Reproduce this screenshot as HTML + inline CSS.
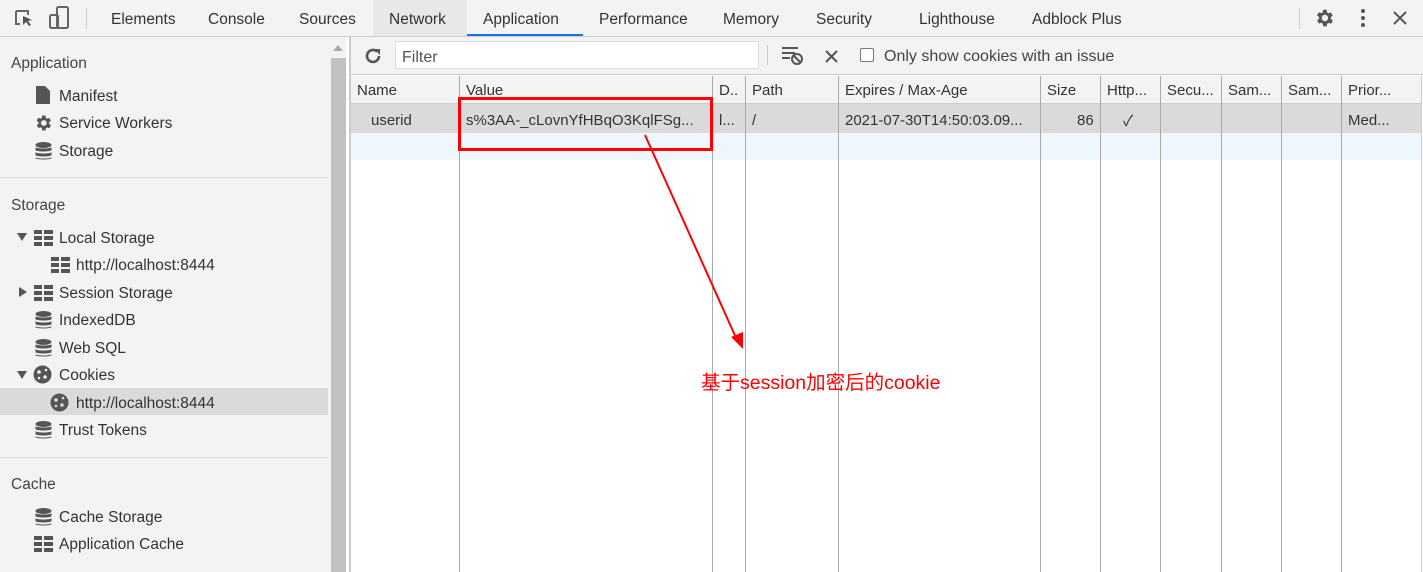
<!DOCTYPE html>
<html><head><meta charset="utf-8"><style>
*{margin:0;padding:0;box-sizing:border-box}
body{width:1423px;height:572px;overflow:hidden;position:relative;background:#fff;font-family:"Liberation Sans","Noto Sans CJK SC",sans-serif;font-size:15px;color:#333}
.a{position:absolute;white-space:nowrap}
.tab{position:absolute;top:11px;color:#333;font-size:15.5px}
.sb{position:absolute;left:0;top:37px;width:330px;height:535px;background:#f3f3f3}
.h{position:absolute;left:11px;color:#444;font-size:15.5px;margin-top:2px}
.it{position:absolute;color:#333;font-size:15.5px;margin-top:2px}
.ic{position:absolute;fill:#555}
.vl{position:absolute;top:76px;bottom:0;width:1px;background:#aaa}
</style></head><body>
<div class="a" style="left:0;top:0;width:1423px;height:37px;background:#f3f3f3;border-bottom:1px solid #ccc"></div>
<svg class="a" style="left:13px;top:8px" width="22" height="22" viewBox="0 0 22 22"><path d="M3 3h12v4M3 3v13h4" fill="none" stroke="#666" stroke-width="2"/><path d="M10 8l9 4-4 1 3 4-2 1-3-4-3 3z" fill="#555"/></svg>
<svg class="a" style="left:48px;top:6px" width="22" height="24" viewBox="0 0 22 24"><rect x="9" y="1" width="11" height="21" rx="1.5" fill="none" stroke="#666" stroke-width="2"/><rect x="2" y="9" width="8" height="13" rx="1.5" fill="none" stroke="#666" stroke-width="2"/></svg>
<div class="a" style="left:86px;top:8px;width:1px;height:21px;background:#ccc"></div>
<div class="tab" style="left:111px">Elements</div>
<div class="tab" style="left:208px">Console</div>
<div class="tab" style="left:299px">Sources</div>
<div class="a" style="left:373px;top:0;width:94px;height:36px;background:#e8e8e8"></div>
<div class="tab" style="left:389px">Network</div>
<div class="tab" style="left:483px">Application</div>
<div class="a" style="left:467px;top:34px;width:116px;height:2px;background:#1a73e8"></div>
<div class="tab" style="left:599px">Performance</div>
<div class="tab" style="left:723px">Memory</div>
<div class="tab" style="left:816px">Security</div>
<div class="tab" style="left:919px">Lighthouse</div>
<div class="tab" style="left:1032px">Adblock Plus</div>
<div class="a" style="left:1299px;top:8px;width:1px;height:21px;background:#ccc"></div>
<svg class="a" style="left:1313px;top:7px" width="22" height="22" viewBox="0 0 24 24"><path fill="#555" d="M19.4 13a7.5 7.5 0 000-2l2.1-1.6-2-3.5-2.5 1a7 7 0 00-1.7-1L15 3h-4l-.4 2.7a7 7 0 00-1.7 1l-2.5-1-2 3.5L6.6 11a7.5 7.5 0 000 2l-2.1 1.6 2 3.5 2.5-1a7 7 0 001.7 1L11 21h4l.4-2.7a7 7 0 001.7-1l2.5 1 2-3.5zM13 15.5a3.5 3.5 0 110-7 3.5 3.5 0 010 7z"/></svg>
<svg class="a" style="left:1358px;top:8px" width="10" height="20"><circle cx="5" cy="3" r="2" fill="#555"/><circle cx="5" cy="10" r="2" fill="#555"/><circle cx="5" cy="17" r="2" fill="#555"/></svg>
<svg class="a" style="left:1393px;top:11px" width="14" height="14"><path d="M1 1l12 12M13 1L1 13" stroke="#555" stroke-width="2"/></svg>

<div class="sb"></div>
<div class="a" style="left:330px;top:37px;width:16px;height:535px;background:#f3f3f3"></div>
<div class="a" style="left:331px;top:58px;width:15px;height:514px;background:#c1c1c1"></div>
<svg class="a" style="left:333px;top:45px" width="10" height="6"><path d="M0 6L5 0 10 6z" fill="#aaa"/></svg>
<div class="a" style="left:349px;top:37px;width:2px;height:535px;background:#ccc"></div>

<div class="h" style="top:53px">Application</div>
<svg class="ic" style="left:36px;top:86px" width="14" height="18"><path d="M0 0h9l5 5v13H0z"/></svg>
<div class="it" style="left:59px;top:86px">Manifest</div>
<svg class="ic" style="left:33px;top:113px" width="20" height="20" viewBox="0 0 24 24"><path d="M19.4 13a7.5 7.5 0 000-2l2.1-1.6-2-3.5-2.5 1a7 7 0 00-1.7-1L15 3h-4l-.4 2.7a7 7 0 00-1.7 1l-2.5-1-2 3.5L6.6 11a7.5 7.5 0 000 2l-2.1 1.6 2 3.5 2.5-1a7 7 0 001.7 1L11 21h4l.4-2.7a7 7 0 001.7-1l2.5 1 2-3.5zM13 15.5a3.5 3.5 0 110-7 3.5 3.5 0 010 7z"/></svg>
<div class="it" style="left:59px;top:113px">Service Workers</div>
<svg class="ic" style="left:35px;top:142px" width="17" height="18"><ellipse cx="8.5" cy="3" rx="8" ry="3"/><path d="M.5 5c0 2 16 2 16 0v3c0 2-16 2-16 0zM.5 10c0 2 16 2 16 0v3c0 2-16 2-16 0zM.5 15c0 2 16 2 16 0v1c0 2-16 2-16 0z"/></svg>
<div class="it" style="left:59px;top:141px">Storage</div>
<div class="a" style="left:0;top:177px;width:328px;height:1px;background:#ddd"></div>

<div class="h" style="top:195px">Storage</div>
<svg class="a" style="left:17px;top:233px" width="10" height="8"><path d="M0 0h10L5 8z" fill="#555"/></svg>
<svg class="ic" style="left:34px;top:230px" width="19" height="16"><rect x="0" y="0" width="8" height="4"/><rect x="10" y="0" width="9" height="4"/><rect x="0" y="6" width="8" height="4"/><rect x="10" y="6" width="9" height="4"/><rect x="0" y="12" width="8" height="4"/><rect x="10" y="12" width="9" height="4"/></svg>
<div class="it" style="left:59px;top:228px">Local Storage</div>
<svg class="ic" style="left:51px;top:257px" width="19" height="16"><rect x="0" y="0" width="8" height="4"/><rect x="10" y="0" width="9" height="4"/><rect x="0" y="6" width="8" height="4"/><rect x="10" y="6" width="9" height="4"/><rect x="0" y="12" width="8" height="4"/><rect x="10" y="12" width="9" height="4"/></svg>
<div class="it" style="left:76px;top:255px">http://localhost:8444</div>
<svg class="a" style="left:19px;top:287px" width="8" height="10"><path d="M0 0v10l8-5z" fill="#555"/></svg>
<svg class="ic" style="left:34px;top:285px" width="19" height="16"><rect x="0" y="0" width="8" height="4"/><rect x="10" y="0" width="9" height="4"/><rect x="0" y="6" width="8" height="4"/><rect x="10" y="6" width="9" height="4"/><rect x="0" y="12" width="8" height="4"/><rect x="10" y="12" width="9" height="4"/></svg>
<div class="it" style="left:59px;top:283px">Session Storage</div>
<svg class="ic" style="left:35px;top:311px" width="17" height="18"><ellipse cx="8.5" cy="3" rx="8" ry="3"/><path d="M.5 5c0 2 16 2 16 0v3c0 2-16 2-16 0zM.5 10c0 2 16 2 16 0v3c0 2-16 2-16 0zM.5 15c0 2 16 2 16 0v1c0 2-16 2-16 0z"/></svg>
<div class="it" style="left:59px;top:310px">IndexedDB</div>
<svg class="ic" style="left:35px;top:339px" width="17" height="18"><ellipse cx="8.5" cy="3" rx="8" ry="3"/><path d="M.5 5c0 2 16 2 16 0v3c0 2-16 2-16 0zM.5 10c0 2 16 2 16 0v3c0 2-16 2-16 0zM.5 15c0 2 16 2 16 0v1c0 2-16 2-16 0z"/></svg>
<div class="it" style="left:59px;top:338px">Web SQL</div>
<svg class="a" style="left:17px;top:371px" width="10" height="8"><path d="M0 0h10L5 8z" fill="#555"/></svg>
<svg class="a" style="left:33px;top:365px" width="19" height="19"><circle cx="9.5" cy="9.5" r="9" fill="#555"/><circle cx="6" cy="7" r="1.8" fill="#f3f3f3"/><circle cx="12" cy="12" r="1.8" fill="#f3f3f3"/><circle cx="6" cy="13" r="1.3" fill="#f3f3f3"/><circle cx="13" cy="5" r="1.3" fill="#f3f3f3"/></svg>
<div class="it" style="left:59px;top:365px">Cookies</div>
<div class="a" style="left:0;top:388px;width:328px;height:27px;background:#dadada"></div>
<svg class="a" style="left:50px;top:393px" width="19" height="19"><circle cx="9.5" cy="9.5" r="9" fill="#555"/><circle cx="6" cy="7" r="1.8" fill="#dadada"/><circle cx="12" cy="12" r="1.8" fill="#dadada"/><circle cx="6" cy="13" r="1.3" fill="#dadada"/><circle cx="13" cy="5" r="1.3" fill="#dadada"/></svg>
<div class="it" style="left:76px;top:393px">http://localhost:8444</div>
<svg class="ic" style="left:35px;top:421px" width="17" height="18"><ellipse cx="8.5" cy="3" rx="8" ry="3"/><path d="M.5 5c0 2 16 2 16 0v3c0 2-16 2-16 0zM.5 10c0 2 16 2 16 0v3c0 2-16 2-16 0zM.5 15c0 2 16 2 16 0v1c0 2-16 2-16 0z"/></svg>
<div class="it" style="left:59px;top:420px">Trust Tokens</div>
<div class="a" style="left:0;top:457px;width:328px;height:1px;background:#ddd"></div>

<div class="h" style="top:474px">Cache</div>
<svg class="ic" style="left:35px;top:508px" width="17" height="18"><ellipse cx="8.5" cy="3" rx="8" ry="3"/><path d="M.5 5c0 2 16 2 16 0v3c0 2-16 2-16 0zM.5 10c0 2 16 2 16 0v3c0 2-16 2-16 0zM.5 15c0 2 16 2 16 0v1c0 2-16 2-16 0z"/></svg>
<div class="it" style="left:59px;top:507px">Cache Storage</div>
<svg class="ic" style="left:34px;top:536px" width="19" height="16"><rect x="0" y="0" width="8" height="4"/><rect x="10" y="0" width="9" height="4"/><rect x="0" y="6" width="8" height="4"/><rect x="10" y="6" width="9" height="4"/><rect x="0" y="12" width="8" height="4"/><rect x="10" y="12" width="9" height="4"/></svg>
<div class="it" style="left:59px;top:534px">Application Cache</div>

<div class="a" style="left:351px;top:37px;width:1072px;height:38px;background:#f3f3f3;border-bottom:1px solid #ccc"></div>
<svg class="a" style="left:363px;top:46px" width="20" height="20" viewBox="0 0 20 20"><path d="M16 10a6 6 0 11-2-4.5" fill="none" stroke="#555" stroke-width="2.6"/><path d="M11 3h6v6z" fill="#555"/></svg>
<div class="a" style="left:395px;top:41px;width:364px;height:28px;background:#fff;border:1px solid #ddd"></div>
<div class="a" style="left:402px;top:49px;color:#555;font-size:16px">Filter</div>
<div class="a" style="left:767px;top:45px;width:1px;height:20px;background:#ccc"></div>
<svg class="a" style="left:781px;top:46px" width="24" height="20"><path d="M1 2h16M1 7h13M1 12h8" stroke="#555" stroke-width="2"/><circle cx="16" cy="13" r="5" fill="none" stroke="#555" stroke-width="2"/><path d="M13 10l6 6" stroke="#555" stroke-width="2"/></svg>
<svg class="a" style="left:825px;top:50px" width="13" height="13"><path d="M1 1l11 11M12 1L1 12" stroke="#555" stroke-width="2"/></svg>
<div class="a" style="left:860px;top:48px;width:14px;height:14px;border:1px solid #777;border-radius:2px;background:#fff"></div>
<div class="a" style="left:884px;top:48px;color:#444;font-size:16px">Only show cookies with an issue</div>

<div class="a" style="left:351px;top:76px;width:1071px;height:28px;background:#f3f3f3;border-bottom:1px solid #ccc"></div>
<div class="a" style="left:351px;top:104px;width:1071px;height:29px;background:#dadada"></div>
<div class="a" style="left:351px;top:133px;width:1071px;height:27px;background:#f0f6fe"></div>
<div class="a" style="left:1421px;top:76px;width:1px;height:496px;background:#ccc"></div>
<div class="vl" style="left:459px"></div><div class="vl" style="left:712px"></div><div class="vl" style="left:745px"></div><div class="vl" style="left:838px"></div><div class="vl" style="left:1040px"></div><div class="vl" style="left:1100px"></div><div class="vl" style="left:1160px"></div><div class="vl" style="left:1221px"></div><div class="vl" style="left:1281px"></div><div class="vl" style="left:1341px"></div>
<div class="a" style="top:82px;left:357px">Name</div>
<div class="a" style="top:82px;left:466px">Value</div>
<div class="a" style="top:82px;left:719px">D..</div>
<div class="a" style="top:82px;left:752px">Path</div>
<div class="a" style="top:82px;left:845px">Expires / Max-Age</div>
<div class="a" style="top:82px;left:1047px">Size</div>
<div class="a" style="top:82px;left:1107px">Http...</div>
<div class="a" style="top:82px;left:1167px">Secu...</div>
<div class="a" style="top:82px;left:1228px">Sam...</div>
<div class="a" style="top:82px;left:1288px">Sam...</div>
<div class="a" style="top:82px;left:1348px">Prior...</div>
<div class="a" style="top:112px;left:371px">userid</div>
<div class="a" style="top:112px;left:466px">s%3AA-_cLovnYfHBqO3KqlFSg...</div>
<div class="a" style="top:112px;left:719px">l...</div>
<div class="a" style="top:112px;left:752px">/</div>
<div class="a" style="top:112px;left:845px">2021-07-30T14:50:03.09...</div>
<div class="a" style="top:112px;left:1077px">86</div>
<div class="a" style="top:110px;left:1123px">✓</div>
<div class="a" style="top:112px;left:1348px">Med...</div>

<div class="a" style="left:458px;top:97px;width:255px;height:54px;border:3px solid #f00"></div>
<svg class="a" style="left:0;top:0" width="1423" height="572"><path d="M645 135L737 340" stroke="#f00" stroke-width="2"/><path d="M731 337l12 12 0-17z" fill="#f00"/></svg>
<div class="a" style="left:701px;top:366px;color:#f00;font-size:19.5px">基于session加密后的cookie</div>
</body></html>
